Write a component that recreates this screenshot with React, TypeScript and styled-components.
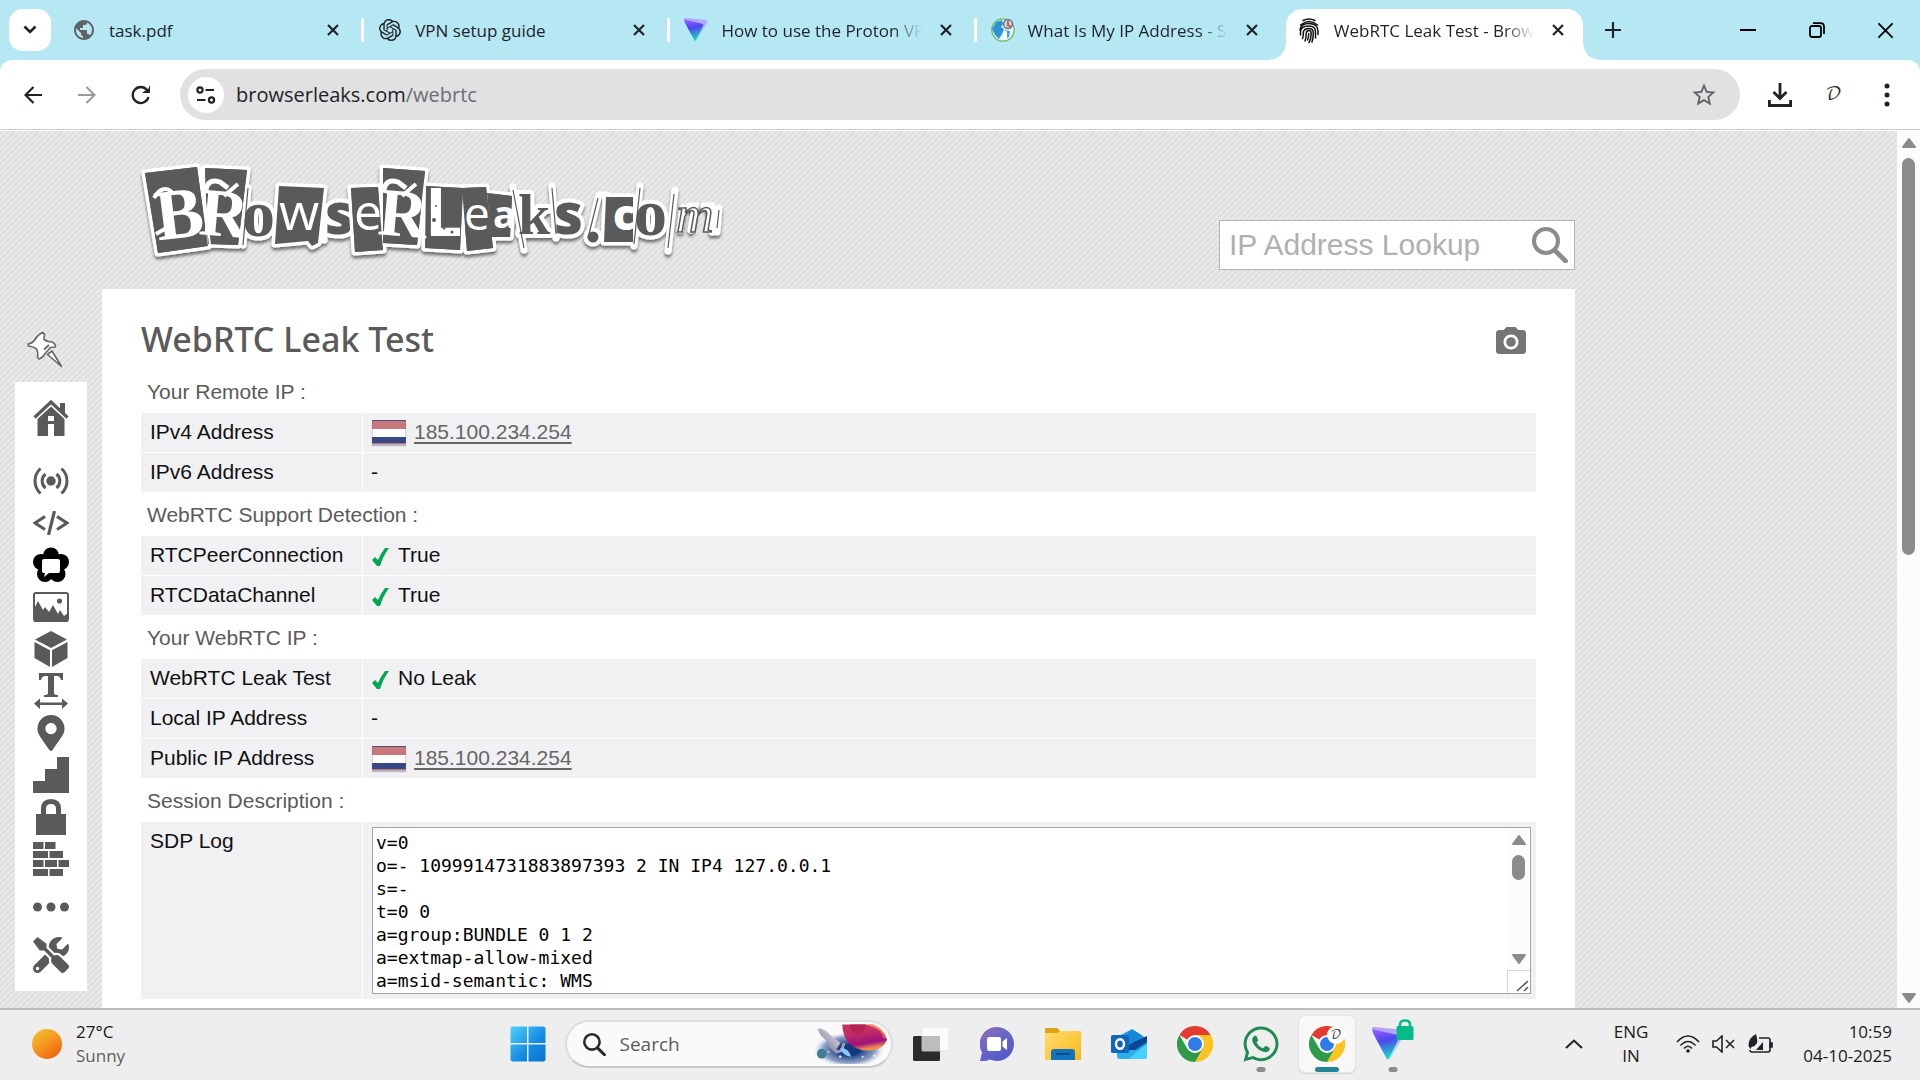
import React from "react";
import styled, { createGlobalStyle, css } from "styled-components";
import { SiOpenai } from "react-icons/si";
import { FaMapMarkerAlt, FaTools, FaWhatsapp } from "react-icons/fa";
import { MdPhotoCamera, MdPublic, MdStarBorder } from "react-icons/md";

const ui = `"Open Sans", "Noto Sans", sans-serif`;
const arial = `"Liberation Sans", Arial, sans-serif`;
const ink = "#5a5a5a";

const GlobalStyle = createGlobalStyle`
  *, *::before, *::after { box-sizing: border-box; }
  body { margin: 0; background: #eeeeee; font-family: ${ui}; }
  button { border: 0; padding: 0; background: none; color: inherit; font: inherit; }
  svg { display: block; flex: none; }
`;

const Screen = styled.div`
  height: 100vh;
  display: flex;
  flex-direction: column;
  overflow: hidden;
`;

/* ---------- tab strip ---------- */

const TabStrip = styled.header`
  height: 60px;
  flex: none;
  display: flex;
  background: #b5e8f3;
`;

const TabSearch = styled.button`
  width: 42px;
  height: 42px;
  margin: 9px 7px 9px 9px;
  flex: none;
  display: grid;
  place-items: center;
  border-radius: 14px;
  background: #fff;
`;

const TabList = styled.nav`
  display: flex;
  flex: 0 1 1531px;
  min-width: 0;
`;

const Tab = styled.div<{ $active?: boolean; $divided?: boolean }>`
  position: relative;
  flex: 1 1 0;
  min-width: 0;
  display: flex;
  align-items: center;
  height: 51px;
  margin-top: 9px;
  padding: 0 23px 9px 14px;
  gap: 13px;
  color: #1f2328;
  ${(p) =>
    p.$divided &&
    css`
      &::after {
        content: "";
        position: absolute;
        right: 0;
        top: 9px;
        width: 3px;
        height: 24px;
        background: #fff;
      }
    `}
  ${(p) =>
    p.$active &&
    css`
      background: #fff;
      border-radius: 16px 16px 0 0;
      margin-left: 3px;
      margin-right: 6px;
      padding: 0 17px 9px 11px;
      &::before,
      &::after {
        content: "";
        position: absolute;
        bottom: 0;
        width: 16px;
        height: 16px;
      }
      &::before {
        left: -16px;
        background: radial-gradient(circle at 0 0, transparent 15px, #fff 16px);
      }
      &::after {
        right: -16px;
        background: radial-gradient(circle at 100% 0, transparent 15px, #fff 16px);
      }
    `}
`;

const TabTitle = styled.span<{ $fade?: boolean }>`
  flex: 1;
  min-width: 0;
  padding-top: 2px;
  margin-right: 3px;
  overflow: hidden;
  white-space: nowrap;
  font-size: 17px;
  line-height: 24px;
  ${(p) =>
    p.$fade &&
    css`
      mask-image: linear-gradient(to right, #000 calc(100% - 30px), transparent);
    `}
`;

const GlyphButton = styled.button<{ $w: number; $h?: number; $color?: string }>`
  width: ${(p) => p.$w}px;
  height: ${(p) => p.$h ?? p.$w}px;
  flex: none;
  display: grid;
  place-items: center;
  color: ${(p) => p.$color ?? "#1f2328"};
`;

const WindowControls = styled.div`
  margin-left: auto;
  display: flex;
`;

/* ---------- toolbar ---------- */

const ToolbarBack = styled.div`
  flex: none;
  background: #b5e8f3;
`;

const Toolbar = styled.div`
  height: 70px;
  display: flex;
  align-items: center;
  padding: 0 6px 0 6px;
  background: #fff;
  border-bottom: 1px solid #c8c8c8;
  border-radius: 12px 12px 0 0;
`;

const Omnibox = styled.label`
  flex: 1;
  min-width: 0;
  height: 51px;
  margin: 0 13px 0 12px;
  padding: 0 9px 0 8px;
  display: flex;
  align-items: center;
  border-radius: 26px;
  background: #e1e1e1;
`;

const SiteInfo = styled.span`
  width: 36px;
  height: 36px;
  flex: none;
  display: grid;
  place-items: center;
  border-radius: 50%;
  background: #fff;
`;

const Url = styled.a`
  flex: 1;
  padding-left: 12px;
  color: #1f2328;
  font-size: 20px;
  line-height: 28px;
  text-decoration: none;
  span { color: #6b6f75; }
`;

const ProfileLetter = styled.span`
  font-family: "DejaVu Math TeX Gyre", "Liberation Serif", serif;
  font-size: 18px;
  line-height: 24px;
  color: #333;
`;

/* ---------- page ---------- */

const Viewport = styled.div`
  flex: 1;
  min-height: 0;
  display: flex;
  background: #fff;
  padding-top: 1px;
`;

const Page = styled.div`
  flex: 1;
  min-width: 0;
  overflow: hidden;
  background: #e5e5e5 linear-gradient(135deg, #ececec 0%, #dcdcdc 25%, #ececec 50%, #dcdcdc 75%, #ececec 100%);
  background-size: 6px 6px;
`;

const Scrollbar = styled.div<{ $w: number }>`
  width: ${(p) => p.$w}px;
  flex: none;
  display: flex;
  flex-direction: column;
  align-items: center;
  background: #fcfcfc;
`;

const Thumb = styled.div<{ $w: number; $h: string }>`
  width: ${(p) => p.$w}px;
  height: ${(p) => p.$h};
  margin: 9px 0 auto;
  border-radius: 8px;
  background: #8b8b8b;
`;

const SiteHeader = styled.div`
  height: 158px;
  margin-right: 322px;
  padding-left: 138px;
  display: flex;
  justify-content: space-between;
  align-items: flex-end;
`;

const LogoLink = styled.a`
  display: block;
  margin-bottom: 26px;
`;

const Lookup = styled.form`
  width: 356px;
  height: 50px;
  margin-bottom: 19px;
  padding: 0 6px 0 9px;
  display: flex;
  align-items: center;
  background: #fff;
  border: 1px solid #b4b4b4;
  input {
    flex: 1;
    min-width: 0;
    padding: 0;
    border: 0;
    outline: 0;
    font: 30px/36px ${arial};
    color: ${ink};
  }
  input::placeholder { color: #b0b0b0; opacity: 1; }
`;

const Columns = styled.div`
  display: flex;
  align-items: flex-start;
`;

const Sidebar = styled.aside`
  width: 102px;
  flex: none;
  padding: 42px 15px 0 15px;
`;

const PinButton = styled.button`
  display: block;
  margin: 0 0 13px 12px;
`;

const SideMenu = styled.nav`
  width: 72px;
  padding: 15px 18px;
  background: #fff;
`;

const SideLink = styled.a<{ $before?: number; $after?: number }>`
  height: 42px;
  margin-top: ${(p) => p.$before ?? 0}px;
  margin-bottom: ${(p) => p.$after ?? 0}px;
  display: grid;
  place-items: center;
  color: ${ink};
`;

const Main = styled.main`
  flex: 1;
  min-width: 0;
  height: 1200px;
  margin-right: 322px;
  padding: 25px 39px 0;
  background: #fff;
`;

const TitleRow = styled.div`
  display: flex;
  justify-content: space-between;
  align-items: center;
  height: 56px;
  padding-right: 7px;
`;

const Title = styled.h1`
  margin: 0;
  padding-bottom: 7px;
  font: 500 34px/44px "Noto Sans", "Open Sans", sans-serif;
  color: ${ink};
`;

const DataTable = styled.table`
  width: 100%;
  table-layout: fixed;
  border-collapse: separate;
  border-spacing: 0;
  font: 21px/26px ${arial};
  color: #111;
  caption {
    height: 43px;
    padding: 9px 6px 0;
    text-align: left;
    color: ${ink};
  }
  th {
    width: 222px;
    padding: 6px 9px;
    border-right: 1px solid #fff;
    text-align: left;
    font-weight: 400;
    vertical-align: top;
  }
  td { padding: 0 8px 1px; }
  th, td {
    height: 40px;
    background: #f1f1f4;
    border-bottom: 1px solid #fff;
  }
`;

const Value = styled.div`
  display: flex;
  align-items: center;
  a {
    color: #666;
    text-decoration: underline;
    text-decoration-thickness: 2px;
    text-underline-offset: 3px;
  }
`;

const Tick = styled.svg`
  margin: 3px 9px 0 1px;
`;

const Flag = styled.span`
  width: 34px;
  height: 24px;
  margin: 0 8px 0 1px;
  border: 1px solid rgba(110, 110, 110, 0.25);
  background: linear-gradient(#c8787d 0 8px, #fff 8px 16px, #384785 16px);
  box-shadow: 0 2px 1px #b8b8bc;
`;

const LogBox = styled.div`
  display: flex;
  height: 167px;
  margin: 5px -3px 4px 1px;
  background: #fff;
  border: 1px solid #a3a3a3;
  textarea {
    flex: 1;
    min-width: 0;
    padding: 3px;
    border: 0;
    outline: 0;
    resize: none;
    overflow: hidden;
    background: none;
    color: #000;
    font: 18px/23px "DejaVu Sans Mono", "Liberation Mono", monospace;
  }
`;

const Resizer = styled.div`
  width: 23px;
  height: 23px;
  border: 1px solid #d8d8d8;
  border-width: 1px 0 0 1px;
  background: #fff;
`;

/* ---------- taskbar ---------- */

const Taskbar = styled.footer`
  height: 72px;
  flex: none;
  display: grid;
  grid-template-columns: 1fr auto 1fr;
  align-items: center;
  padding-bottom: 2px;
  background: #eeeeee;
  border-top: 2px solid #bdbdbd;
  font-size: 17px;
  line-height: 24px;
  color: #1b1b1b;
`;

const Weather = styled.button`
  justify-self: start;
  margin-left: 32px;
  display: flex;
  align-items: center;
  gap: 14px;
  text-align: left;
`;

const Sun = styled.span`
  width: 30px;
  height: 30px;
  border-radius: 50%;
  background: linear-gradient(145deg, #f0c22f 5%, #f59a20 45%, #f2660c 85%);
`;

const Lines = styled.span<{ $align?: string; $w?: number }>`
  display: flex;
  flex-direction: column;
  text-align: ${(p) => p.$align ?? "left"};
  width: ${(p) => (p.$w ? `${p.$w}px` : "auto")};
`;

const Muted = styled.span`
  color: #5f5f5f;
`;

const Apps = styled.div`
  display: flex;
  align-items: center;
`;

const AppButton = styled.button<{ $active?: boolean }>`
  position: relative;
  width: 56px;
  height: 56px;
  margin: 0 5px;
  display: grid;
  place-items: center;
  border-radius: 6px;
  ${(p) =>
    p.$active &&
    css`
      background: #f8f8f8;
      box-shadow: 0 0 0 1px #e4e4e4, 0 1px 1px 1px #d5d5d5;
    `}
`;

const Running = styled.span<{ $active?: boolean }>`
  position: absolute;
  bottom: 0;
  left: 50%;
  width: ${(p) => (p.$active ? 24 : 9)}px;
  height: 5px;
  transform: translateX(-50%);
  border-radius: 3px;
  background: ${(p) => (p.$active ? "#25859a" : "#8b8b8b")};
`;

const SearchPill = styled.label`
  width: 328px;
  height: 48px;
  margin: 0 5px 0 4px;
  padding: 0 2px 0 16px;
  display: flex;
  align-items: center;
  gap: 14px;
  border: 2px solid #dedede;
  border-bottom-color: #c9c9c9;
  border-radius: 24px;
  background: #fafafa;
  input {
    flex: 1;
    min-width: 0;
    padding: 0;
    border: 0;
    outline: 0;
    background: none;
    font: 19px/26px ${ui};
  }
  input::placeholder { color: #5c5c5c; opacity: 1; }
`;

const Tray = styled.div`
  justify-self: end;
  display: flex;
  align-items: center;
  padding-right: 28px;
`;

/* ---------- drawings ---------- */

const Cross = ({ s = 12, w = 2.2 }: { s?: number; w?: number }) => (
  <svg width={s} height={s} viewBox="0 0 12 12" stroke="currentColor" strokeWidth={w} fill="none">
    <path d="M1 1l10 10M11 1L1 11" />
  </svg>
);

const Triangle = ({ down }: { down?: boolean }) => (
  <svg width="16" height="12" viewBox="0 0 16 12" fill="#8b8b8b" stroke="#8b8b8b" strokeWidth="2" strokeLinejoin="round">
    <path d={down ? "M2 2h12L8 10z" : "M2 10h12L8 2z"} />
  </svg>
);

const FingerprintMark = () => (
  <svg width="20" height="26" viewBox="0 0 20 26" fill="none" stroke="#111" strokeWidth="1.500" strokeLinecap="round">
    <path d="M4 2.500q6-3 12 0M1.500 7q8.500-7 17 0M1 12q1-6.500 9-6.500t9 7v4M1.500 17v-3q0-6 8.500-6 6.500 0 6.500 6v6" />
    <path d="M3.500 20.500q1-2 .8-5.500 0-4.500 5.700-4.500 4.300 0 4.300 4.500 0 5-1.300 9M6 23q1.500-4 1.200-8 .3-2.500 2.800-2.500 2.200 0 2.200 3 0 5.500-2.200 9M8.500 22q1.300-3 1.300-6.500" />
  </svg>
);

const ProtonMark = ({ s = 24, id }: { s?: number; id: string }) => (
  <svg width={s} height={s} viewBox="0 0 24 24">
    <defs>
      <linearGradient id={id} x1="0" y1="0" x2="0.2" y2="1">
        <stop offset="0.1" stopColor="#8a5cff" />
        <stop offset="0.45" stopColor="#4f46f0" />
        <stop offset="1" stopColor="#19d3c5" />
      </linearGradient>
      <linearGradient id={`${id}b`} x1="0" y1="0" x2="0" y2="1">
        <stop offset="0" stopColor="#b79cff" />
        <stop offset="1" stopColor="#8ff0ea" />
      </linearGradient>
    </defs>
    <path d="M1 0L22 2q2.500 .5 1.200 2.600L13 22q-1.500 2-2.700 0L0 1.600Q0 0 1 0z" fill={`url(#${id}b)`} />
    <path d="M0 1.500L1 5L10.500 22.500q1 .6 1.500-.6L19 8q.8-2-1.500-2.500z" fill={`url(#${id})`} />
  </svg>
);

const IpFavicon = () => (
  <svg width="24" height="24" viewBox="0 0 24 24">
    <circle cx="12" cy="12" r="11.200" fill="#eaf6fb" stroke="#6bbf6b" strokeWidth="1.300" />
    <path d="M5 4l6-2 1 4-2 3 3 2-2 5-3 5-4-4-3-6z" fill="#2a94d6" />
    <path d="M14 12l5 1-1 6-4 2z" fill="#3ba3dd" />
    <circle cx="17" cy="6" r="4.500" fill="#c7d3dc" stroke="#66788a" strokeWidth="1.500" />
    <path d="M17 2.500v5l3 1" stroke="#e0402d" strokeWidth="1.600" fill="none" />
    <path d="M13 13h3v8h-3z" fill="#fff" />
  </svg>
);

const Magnifier = ({ s, w, color }: { s: number; w: number; color: string }) => (
  <svg width={s} height={s} viewBox="0 0 36 36" fill="none" stroke={color} strokeWidth={w} strokeLinecap="round">
    <circle cx="14" cy="14" r="12" />
    <path d="M23.500 24L33.500 34" strokeWidth={w * 1.2} />
  </svg>
);

const tile = { fill: ink, stroke: "#fff", strokeWidth: 7, strokeLinejoin: "round" as const, paintOrder: "stroke" };
const white = { fill: "#fff" };
const dark = { fill: ink, stroke: "#fff", strokeWidth: 8, strokeLinejoin: "round" as const, paintOrder: "stroke" };
const serif = "'Liberation Serif', serif";
const sans = "'Open Sans', sans-serif";

const Logo = () => (
  <svg width="588" height="103" viewBox="16 20 588 103" role="img" aria-label="BrowserLeaks.com">
    <defs>
      <filter id="logoShadow" x="-5%" y="-10%" width="110%" height="130%">
        <feDropShadow dx="0" dy="3" stdDeviation="1.800" floodColor="#000" floodOpacity="0.5" />
      </filter>
    </defs>
    <g filter="url(#logoShadow)">
      <g stroke="#fff" strokeWidth="7" strokeLinecap="round">
        <path d="M126 48l-5 57M199 48l3 52M391 47l11 63M430 46l4 52M466 100l10-42M518 46l-6 60M553 50l-7 61M597 68l-2 24M590 66l1 26M477 55h8" />
        <path d="M561 68l-3 22M567 66h6l-4 24M582 66h6l2 26" />
      </g>
      <text x="120" y="96" fontFamily={serif} fontWeight="700" fontSize="66" {...dark}>o</text>
      <text x="203" y="94" fontFamily={sans} fontWeight="800" fontSize="56" {...dark}>s</text>
      <text x="396" y="94" fontFamily={serif} fontWeight="700" fontSize="58" {...dark}>k</text>
      <text x="432" y="94" fontFamily={sans} fontWeight="800" fontSize="56" {...dark}>s</text>
      <circle cx="471" cy="97" r="5.500" {...dark} />
      <text x="512" y="95" fontFamily={serif} fontWeight="700" fontSize="66" {...dark}>o</text>
      <path {...tile} d="M23 33L75 27L86 106L36 113z" />
      <path {...tile} d="M83 28L125 30L116 105L86 104z" />
      <path {...tile} d="M157 46L202 48L196 103L190 106L186 101L153 104z" />
      <path {...tile} d="M229 48L256 47L261 110L233 112z" />
      <path {...tile} d="M261 28L303 31L295 105L261 103z" />
      <path {...tile} d="M365 53L390 56L388 97L369 97z" />
      <path {...tile} d="M340 48L364 47L371 108L345 111z" />
      <path {...tile} d="M302 46L341 48L338 110L303 108z" />
      <path {...tile} d="M484 57L511 57L511 102L482 102z" />
    </g>
    <g fill={ink}>
      <path d="M23 33L75 27L86 106L36 113z" />
      <path d="M83 28L125 30L116 105L86 104z" />
      <path d="M229 48L256 47L261 110L233 112z" />
      <path d="M261 28L303 31L295 105L261 103z" />
      <path d="M302 46L341 48L338 110L303 108z" />
      <path d="M340 48L364 47L371 108L345 111z" />
      <path d="M365 53L390 56L388 97L369 97z" />
    </g>
    <path d="M79 26L88 105M303 46l-1 62" stroke="#fff" strokeWidth="2" />
    <g fontFamily={serif} {...white}>
      <text x="34" y="98" fontSize="72" fontWeight="700" transform="rotate(-7 56 80)">B</text>
      <text x="78" y="96" fontSize="68" fontWeight="700" transform="rotate(5 100 70)">R</text>
      <text x="257" y="96" fontSize="68" fontWeight="700" transform="rotate(5 280 70)">R</text>
      <text x="303" y="96" fontSize="66" fontWeight="700" fontFamily={sans}>L</text>
    </g>
    <g fontFamily={sans} {...white}>
      <text x="157" y="90" fontSize="52">w</text>
      <text x="232" y="90" fontSize="50">e</text>
      <text x="342" y="90" fontSize="46">e</text>
      <text x="371" y="88" fontSize="38" fontWeight="700">a</text>
      <text x="491" y="90" fontSize="42" fontWeight="800">c</text>
      <text x="554" y="92" fontSize="52" fontFamily={serif} fontStyle="italic" stroke={ink} strokeWidth="1.500">m</text>
    </g>
    <g stroke={ink} strokeWidth="1.200" fill="none">
      <path d="M126 48l-5 57M391 50l11 58M430 48l4 46M466 98l10-40M518 48l-6 56M552 54l-6 54M597 70l-2 18" />
      <path d="M84 50q2-12 14-8l8 6M262 50q2-12 14-8l8 6" stroke="#fff" strokeWidth="5" />
      <path d="M32 58q8-14 18-6M34 94l14-8M116 44l-14 12M294 44l-14 12" stroke="#fff" strokeWidth="4" />
    </g>
    <g fill={ink}>
      <circle cx="327" cy="62" r="2" />
      <circle cx="312" cy="80" r="2" />
      <circle cx="330" cy="92" r="1.500" />
      <circle cx="322" cy="88" r="1.500" />
      <circle cx="314" cy="66" r="1" />
    </g>
  </svg>
);

const Pin = () => (
  <svg width="36" height="38" viewBox="0 0 36 38" fill="#fff" stroke="#666" strokeWidth="1.600" strokeLinejoin="round">
    <path d="M20.500 23.500L34.500 35.500L25 20z" />
    <path d="M15.500 1.500l2 1.500-.5 5.500q4 3 8.500 2.500l3 3-.5 2-4.500.5-5 5.500q-3 5-6.500 6l-1.500-1.500q1-6-1.500-9-3-2-7.500-2.500l-.5-2q5-1 7-4.500 3-5 7.500-7z" />
    <path d="M17 18.500l5-4.500" strokeWidth="1.800" />
  </svg>
);

const HomeIcon = () => (
  <svg width="36" height="36" viewBox="0 0 36 36" fill="currentColor">
    <path d="M27 3h5v12l-5-5z" />
    <path d="M1.500 17.500L18 2l16.500 15.500" fill="none" stroke="currentColor" strokeWidth="3.200" />
    <path fillRule="evenodd" d="M4.500 19L18 6.500L31.500 19v17H21V24h-6v12H4.500zM15 16v5h6v-5z" />
  </svg>
);

const SignalIcon = () => (
  <svg width="36" height="28" viewBox="0 0 36 28" fill="none" stroke="currentColor" strokeWidth="3">
    <circle cx="18" cy="14" r="4.700" fill="currentColor" stroke="none" />
    <path d="M12.500 7a9 9 0 0 0 0 14M7.500 1.500a17 17 0 0 0 0 25M23.500 7a9 9 0 0 1 0 14M28.500 1.500a17 17 0 0 1 0 25" />
  </svg>
);

const CodeIcon = () => (
  <svg width="36" height="24" viewBox="0 0 36 24" fill="none" stroke="currentColor" strokeWidth="3.200">
    <path d="M12 5.500L2 12l10 6.500M24 5.500L34 12l-10 6.500M21.500 0l-6 24" />
  </svg>
);

const FlowerIcon = () => (
  <svg width="36" height="36" viewBox="0 0 36 36">
    <g fill="#000">
      <circle cx="18" cy="8.500" r="8" />
      <circle cx="8" cy="15" r="8" />
      <circle cx="28" cy="15" r="8" />
      <circle cx="12" cy="27" r="8" />
      <circle cx="24.500" cy="27" r="8" />
    </g>
    <path d="M11 12h14q2 0 2 2v10q0 2-2 2H16l-5 4 1-4q-3 0-3-2V14q0-2 2-2z" fill="#fff" />
  </svg>
);

const ImageIcon = () => (
  <svg width="36" height="30" viewBox="0 0 36 30">
    <rect x="1" y="1" width="34" height="28" rx="2" fill="none" stroke="currentColor" strokeWidth="2" />
    <path d="M1 17l4-8 5 9 2-3 4 5 4-7 5 9 2-4 4 6 4-3v9H1z" fill="currentColor" />
    <circle cx="26.500" cy="9" r="2.600" fill="currentColor" />
  </svg>
);

const CubeIcon = () => (
  <svg width="36" height="36" viewBox="0 0 36 36" fill="currentColor">
    <path d="M18 0l16 8.500L18 17 2 8.500zM1.500 11L17 19.200V36L1.500 27zM34.500 11L19 19.200V36l15.500-9z" />
  </svg>
);

const TypeIcon = () => (
  <svg width="36" height="36" viewBox="0 0 36 36" fill="currentColor">
    <path d="M6 0h24v7h-2q-1-4-4-4h-3v17q0 2 4 2v2H11v-2q4 0 4-2V3h-3q-3 0-4 4H6z" />
    <path d="M1 30.500l6-5v4h22v-4l6 5-6 5.500v-4H7v4z" />
  </svg>
);

const StairsIcon = () => (
  <svg width="36" height="36" viewBox="0 0 36 36" fill="currentColor">
    <path d="M24 0h12v36H0V24h12V12h12z" />
  </svg>
);

const LockIcon = () => (
  <svg width="36" height="36" viewBox="0 0 36 36" fill="currentColor">
    <path d="M3 15h30v21H3z" />
    <path d="M10.500 16v-6q0-7.500 7.500-7.500t7.500 7.500v6" fill="none" stroke="currentColor" strokeWidth="5" />
  </svg>
);

const BricksIcon = () => (
  <svg width="36" height="34" viewBox="0 0 36 34" fill="currentColor">
    <path d="M0 0h10.500v7H0zM12 0h10.500v7H12zM0 9h15v7H0zM16.500 9H30v7H16.500zM0 18h10.500v7H0zM12 18h12v7H12zM25.500 18H36v7H25.500zM0 27h15v7H0zM16.500 27H30v7H16.500z" />
  </svg>
);

const DotsIcon = () => (
  <svg width="36" height="10" viewBox="0 0 36 10" fill="currentColor">
    <circle cx="4.500" cy="5" r="4.500" />
    <circle cx="18" cy="5" r="4.500" />
    <circle cx="31.500" cy="5" r="4.500" />
  </svg>
);

const Chrome = ({ badge }: { badge?: boolean }) => (
  <svg width="36" height="36" viewBox="0 0 36 36">
    <path d="M18 18L2.400 9A18 18 0 0 1 33.600 9z" fill="#e33b2e" />
    <path d="M18 9h15.600A18 18 0 0 1 18 36l7.800-13.500z" fill="#fcc31e" />
    <path d="M2.400 9A18 18 0 0 0 18 36l7.800-13.500L18 18l-7.800 4.500z" fill="#2f9a48" />
    <circle cx="18" cy="18" r="9" fill="#fff" />
    <circle cx="18" cy="18" r="7" fill="#2f7bea" />
    {badge && (
      <>
        <circle cx="27" cy="9" r="9" fill="#fff" />
        <text x="27" y="13" textAnchor="middle" fontSize="12" fontFamily="'DejaVu Math TeX Gyre', serif" fill="#333">𝒟</text>
      </>
    )}
  </svg>
);

const WinLogo = () => (
  <svg width="36" height="36" viewBox="0 0 36 36">
    <defs>
      <linearGradient id="win" x1="0" y1="0" x2="1" y2="1" gradientUnits="objectBoundingBox">
        <stop offset="0" stopColor="#4fd0fd" />
        <stop offset="0.6" stopColor="#148ae0" />
        <stop offset="1" stopColor="#0a74d0" />
      </linearGradient>
    </defs>
    <path d="M2 .5h15v16.500H.5V2zM18.500 .5h15.500l1.500 1.500v15h-17zM.5 18.500H17v17H2L.5 34zM18.500 18.500h17V34L34 35.500H18.500z" fill="url(#win)" />
  </svg>
);

const SpaceArt = () => (
  <svg width="76" height="40" viewBox="0 0 78 40">
    <defs>
      <radialGradient id="space">
        <stop offset="0.3" stopColor="#123a7c" />
        <stop offset="0.75" stopColor="#4668a8" stopOpacity="0.6" />
        <stop offset="1" stopColor="#c9c8ea" stopOpacity="0" />
      </radialGradient>
      <linearGradient id="planet" x1="0" y1="0" x2="0.3" y2="1">
        <stop offset="0" stopColor="#c13566" />
        <stop offset="0.4" stopColor="#c42b66" />
        <stop offset="0.8" stopColor="#a0127a" />
        <stop offset="1" stopColor="#f08a50" />
      </linearGradient>
      <linearGradient id="hull" x1="0" y1="1" x2="1" y2="0">
        <stop offset="0" stopColor="#77708c" />
        <stop offset="1" stopColor="#efeaf6" />
      </linearGradient>
    </defs>
    <ellipse cx="37" cy="26" rx="36" ry="18" fill="url(#space)" />
    <path d="M30 0H55q17 3 21 16-5 11-20 11Q31 25 30 0z" fill="url(#planet)" />
    <path d="M38 0h16q-1 10-8 10-8-1-8-10z" fill="#b52352" />
    <path d="M57 0q14 3 17 14" stroke="#ef7a50" strokeWidth="3" fill="none" opacity="0.7" />
    <path d="M5 4q7 0 11 5l12 10-4 7L11 14Q6 10 5 4z" fill="url(#hull)" />
    <path d="M16 20l8 8 5-1 3-8" fill="none" stroke="#a39bb8" strokeWidth="3" />
    <path d="M28 24q9 0 11 9-9-1-11-9z" fill="#8cc7ff" />
    <circle cx="9" cy="30" r="5" fill="#3f7f96" />
    <g fill="#fff3d0">
      <circle cx="28" cy="33" r="1.200" />
      <circle cx="16" cy="28" r=".9" />
      <circle cx="51" cy="33" r="1" />
      <circle cx="63" cy="32" r="1.200" />
    </g>
  </svg>
);

const TaskView = () => (
  <svg width="36" height="34" viewBox="0 0 36 34">
    <rect x="0" y="9" width="27" height="25" rx="1.500" fill="#2b2b2b" />
    <rect x="9" y="0" width="27" height="24" rx="1" fill="#fbfbfb" stroke="#d8d8d8" strokeWidth=".8" />
    <path d="M9 9h18v15H9z" fill="#bdbdbd" />
  </svg>
);

const ChatIcon = () => (
  <svg width="34" height="34" viewBox="0 0 34 34">
    <defs>
      <linearGradient id="chat" x1="0" y1="0" x2="0.7" y2="1">
        <stop offset="0" stopColor="#9a6bb0" />
        <stop offset="0.45" stopColor="#6a68c8" />
        <stop offset="1" stopColor="#5557cc" />
      </linearGradient>
    </defs>
    <path d="M17 0a17 17 0 1 1-7 32.500Q6 34.500 0 34l2-8.500A17 17 0 0 1 17 0z" fill="url(#chat)" />
    <rect x="7" y="10" width="14" height="14" rx="2" fill="#fff" />
    <path d="M22.500 14.500L27 11v12l-4.500-3.500z" fill="#fff" />
  </svg>
);

const Explorer = () => (
  <svg width="36" height="34" viewBox="0 0 36 34">
    <defs>
      <linearGradient id="folder" x1="0" y1="0" x2="1" y2="1">
        <stop offset="0" stopColor="#ffdd70" />
        <stop offset="1" stopColor="#f9b914" />
      </linearGradient>
    </defs>
    <path d="M1 1h11l3 3v5H0V2z" fill="#e0a010" />
    <path d="M0 6h12l3-2h20q1 0 1 1v28H0z" fill="url(#folder)" />
    <path d="M6 33V25q0-3 3-3h18q3 0 3 3v8z" fill="#1272bd" />
    <path d="M11 27h14" stroke="#0a4e8a" strokeWidth="2" />
  </svg>
);

const Outlook = () => (
  <svg width="36" height="32" viewBox="0 0 36 32">
    <path d="M8 8L21 1l15 10v17q0 3-3 3H9z" fill="#1b9de2" />
    <path d="M18 16l18-8v6L18 26z" fill="#0d4595" />
    <path d="M12 9L22 2l10 6-14 9z" fill="#1687d8" />
    <path d="M15 31l21-15v12q0 3-3 3z" fill="#45d3fb" />
    <path d="M6 22v6q0 3 3 3h9L28 22z" fill="#2bb0ee" />
    <rect x="0" y="7" width="18" height="18" rx="1.500" fill="#1066bd" />
    <ellipse cx="9" cy="16" rx="4" ry="4.800" fill="none" stroke="#fff" strokeWidth="2.400" />
  </svg>
);

const ProtonApp = () => (
  <svg width="42" height="50" viewBox="0 0 42 50">
    <g transform="translate(0 8)">
      <ProtonMark s={34} id="protonTask" />
    </g>
    <rect x="24.500" y="7" width="17" height="14" rx="1.500" fill="#06bb88" />
    <path d="M28 7V5.500q0-4 5-4t5 4V7" fill="none" stroke="#06bb88" strokeWidth="2.600" />
  </svg>
);

/* ---------- data ---------- */

const tabs = [
  { title: "task.pdf", icon: <MdPublic size={24} color="#5f6368" />, divided: true },
  { title: "VPN setup guide", icon: <SiOpenai size={22} />, divided: true },
  { title: "How to use the Proton VPN", icon: <ProtonMark id="protonTab" />, divided: true, fade: true },
  { title: "What Is My IP Address - See", icon: <IpFavicon />, fade: true },
  { title: "WebRTC Leak Test - Browse", icon: <FingerprintMark />, active: true, fade: true },
];

const sideItems = [
  { label: "Home", icon: <HomeIcon />, after: 21 },
  { label: "IP Address", icon: <SignalIcon /> },
  { label: "JavaScript", icon: <CodeIcon /> },
  { label: "WebRTC", icon: <FlowerIcon /> },
  { label: "Canvas", icon: <ImageIcon /> },
  { label: "WebGL", icon: <CubeIcon /> },
  { label: "Fonts", icon: <TypeIcon /> },
  { label: "Geolocation", icon: <FaMapMarkerAlt size={36} /> },
  { label: "Features", icon: <StairsIcon /> },
  { label: "TLS", icon: <LockIcon /> },
  { label: "Content Filters", icon: <BricksIcon /> },
  { label: "More Tools", icon: <DotsIcon />, before: 6 },
  { label: "Settings", icon: <FaTools size={36} />, before: 6 },
];

type Row = { name: string; kind: "ip" | "ok" | "none"; value: string };
const sections: { caption: string; rows: Row[] }[] = [
  {
    caption: "Your Remote IP :",
    rows: [
      { name: "IPv4 Address", kind: "ip", value: "185.100.234.254" },
      { name: "IPv6 Address", kind: "none", value: "-" },
    ],
  },
  {
    caption: "WebRTC Support Detection :",
    rows: [
      { name: "RTCPeerConnection", kind: "ok", value: "True" },
      { name: "RTCDataChannel", kind: "ok", value: "True" },
    ],
  },
  {
    caption: "Your WebRTC IP :",
    rows: [
      { name: "WebRTC Leak Test", kind: "ok", value: "No Leak" },
      { name: "Local IP Address", kind: "none", value: "-" },
      { name: "Public IP Address", kind: "ip", value: "185.100.234.254" },
    ],
  },
];

const sdp = `v=0
o=- 1099914731883897393 2 IN IP4 127.0.0.1
s=-
t=0 0
a=group:BUNDLE 0 1 2
a=extmap-allow-mixed
a=msid-semantic: WMS`;

const RowValue = ({ row }: { row: Row }) => (
  <Value>
    {row.kind === "ip" && (
      <>
        <Flag />
        <a href="#ip">{row.value}</a>
      </>
    )}
    {row.kind === "ok" && (
      <>
        <Tick width="17" height="18" viewBox="0 0 17 18" fill="#06a651">
          <path d="M0 12l3-3 3 3Q9 5 13 0h4Q11 8 8 18H5z" />
        </Tick>
        {row.value}
      </>
    )}
    {row.kind === "none" && row.value}
  </Value>
);

export default function App() {
  return (
    <Screen>
      <GlobalStyle />
      <TabStrip>
        <TabSearch aria-label="Search tabs">
          <svg width="14" height="10" viewBox="0 0 14 10" fill="none" stroke="#1f2328" strokeWidth="2.600">
            <path d="M1.500 1.500L7 7l5.500-5.500" />
          </svg>
        </TabSearch>
        <TabList>
          {tabs.map((t) => (
            <Tab key={t.title} $active={t.active} $divided={t.divided}>
              <GlyphButton as="span" $w={24}>{t.icon}</GlyphButton>
              <TabTitle $fade={t.fade}>{t.title}</TabTitle>
              <GlyphButton $w={16} aria-label={`Close ${t.title}`}>
                <Cross />
              </GlyphButton>
            </Tab>
          ))}
        </TabList>
        <GlyphButton $w={48} $h={60} aria-label="New tab">
          <svg width="16" height="16" viewBox="0 0 16 16" stroke="currentColor" strokeWidth="2.200">
            <path d="M8 0v16M0 8h16" />
          </svg>
        </GlyphButton>
        <WindowControls>
          <GlyphButton $w={69} $h={60} aria-label="Minimize">
            <svg width="16" height="2" viewBox="0 0 16 2" fill="#000"><path d="M0 0h16v2H0z" /></svg>
          </GlyphButton>
          <GlyphButton $w={69} $h={60} aria-label="Restore">
            <svg width="16" height="16" viewBox="0 0 16 16" fill="none" stroke="#000" strokeWidth="1.800">
              <rect x="1" y="4" width="11" height="11" rx="2" />
              <path d="M4 1.200h7.500q3.500 0 3.500 3.500V12" />
            </svg>
          </GlyphButton>
          <GlyphButton $w={69} $h={60} $color="#000" aria-label="Close window">
            <Cross s={17} w={1.3} />
          </GlyphButton>
        </WindowControls>
      </TabStrip>

      <ToolbarBack>
        <Toolbar>
          <GlyphButton $w={54} aria-label="Back">
            <svg width="18" height="18" viewBox="0 0 18 18" fill="none" stroke="currentColor" strokeWidth="2.200">
              <path d="M18 9H2M9.500 1L1.500 9l8 8" />
            </svg>
          </GlyphButton>
          <GlyphButton $w={54} $color="#9b9b9b" aria-label="Forward">
            <svg width="18" height="18" viewBox="0 0 18 18" fill="none" stroke="currentColor" strokeWidth="2">
              <path d="M0 9h16M8.500 1l8 8-8 8" />
            </svg>
          </GlyphButton>
          <GlyphButton $w={54} aria-label="Reload">
            <svg width="20" height="20" viewBox="0 0 20 20" fill="none" stroke="currentColor" strokeWidth="2.300">
              <path d="M17.500 12A8 8 0 1 1 16 5l1 1.500" />
              <path d="M19 0v8h-8l3-2.200 3-1.300z" fill="currentColor" stroke="none" />
            </svg>
          </GlyphButton>
          <Omnibox>
            <SiteInfo>
              <svg width="20" height="18" viewBox="0 0 20 18" fill="none" stroke="#1f2328" strokeWidth="2.200">
                <circle cx="4" cy="4" r="2.600" />
                <path d="M9.500 4H18M1 14h8.500" />
                <circle cx="15.500" cy="14" r="2.600" />
              </svg>
            </SiteInfo>
            <Url href="#page">
              browserleaks.com<span>/webrtc</span>
            </Url>
            <GlyphButton $w={54} $color="#5f6368" aria-label="Bookmark this page">
              <MdStarBorder size={28} />
            </GlyphButton>
          </Omnibox>
          <GlyphButton $w={54} aria-label="Downloads">
            <svg width="24" height="24" viewBox="0 0 24 24" fill="none" stroke="currentColor" strokeWidth="2.800">
              <path d="M12 0v15M5.500 9l6.500 6.500L18.500 9M1.400 17v5.500h21.200V17" />
            </svg>
          </GlyphButton>
          <GlyphButton $w={53} aria-label="Profile">
            <ProfileLetter>𝒟</ProfileLetter>
          </GlyphButton>
          <GlyphButton $w={54} aria-label="Menu">
            <svg width="6" height="24" viewBox="0 0 6 24" fill="currentColor">
              <circle cx="3" cy="3" r="2.500" />
              <circle cx="3" cy="12" r="2.500" />
              <circle cx="3" cy="21" r="2.500" />
            </svg>
          </GlyphButton>
        </Toolbar>
      </ToolbarBack>

      <Viewport>
        <Page>
          <SiteHeader>
            <LogoLink href="#home"><Logo /></LogoLink>
            <Lookup>
              <input type="text" aria-label="IP Address Lookup" placeholder="IP Address Lookup" />
              <GlyphButton $w={36} type="button" aria-label="Look up">
                <Magnifier s={36} w={4} color="#8b8b8b" />
              </GlyphButton>
            </Lookup>
          </SiteHeader>
          <Columns>
            <Sidebar>
              <PinButton aria-label="Pin menu"><Pin /></PinButton>
              <SideMenu>
                {sideItems.map((s) => (
                  <SideLink key={s.label} href="#tool" aria-label={s.label} $before={s.before} $after={s.after}>
                    {s.icon}
                  </SideLink>
                ))}
              </SideMenu>
            </Sidebar>
            <Main>
              <TitleRow>
                <Title>WebRTC Leak Test</Title>
                <GlyphButton $w={36} $color="#757575" aria-label="Take screenshot">
                  <MdPhotoCamera size={36} />
                </GlyphButton>
              </TitleRow>
              {sections.map((s) => (
                <DataTable key={s.caption}>
                  <caption>{s.caption}</caption>
                  <tbody>
                    {s.rows.map((r) => (
                      <tr key={r.name}>
                        <th scope="row">{r.name}</th>
                        <td><RowValue row={r} /></td>
                      </tr>
                    ))}
                  </tbody>
                </DataTable>
              ))}
              <DataTable>
                <caption>Session Description :</caption>
                <tbody>
                  <tr>
                    <th scope="row"><label htmlFor="sdp">SDP Log</label></th>
                    <td>
                      <LogBox>
                        <textarea id="sdp" readOnly value={sdp} />
                        <Scrollbar $w={23}>
                          <svg width="1" height="6" />
                          <Triangle />
                          <Thumb $w={13} $h="25px" />
                          <Triangle down />
                          <svg width="1" height="5" />
                          <Resizer>
                            <svg width="22" height="22" viewBox="0 0 22 22" stroke="#555" strokeWidth="1.500">
                              <path d="M9 20L20 10M16 20l4-4" />
                            </svg>
                          </Resizer>
                        </Scrollbar>
                      </LogBox>
                    </td>
                  </tr>
                </tbody>
              </DataTable>
            </Main>
          </Columns>
        </Page>
        <Scrollbar $w={23}>
          <svg width="1" height="6" />
          <Triangle />
          <Thumb $w={13} $h="45.3%" />
          <Triangle down />
          <svg width="1" height="4" />
        </Scrollbar>
      </Viewport>

      <Taskbar>
        <Weather>
          <Sun />
          <Lines>
            <span>27°C</span>
            <Muted>Sunny</Muted>
          </Lines>
        </Weather>
        <Apps>
          <AppButton aria-label="Start"><WinLogo /></AppButton>
          <SearchPill>
            <Magnifier s={23} w={4} color="#2a2a2a" />
            <input type="text" aria-label="Search" placeholder="Search" />
            <SpaceArt />
          </SearchPill>
          <AppButton aria-label="Task view"><TaskView /></AppButton>
          <AppButton aria-label="Chat"><ChatIcon /></AppButton>
          <AppButton aria-label="File Explorer"><Explorer /></AppButton>
          <AppButton aria-label="Outlook"><Outlook /></AppButton>
          <AppButton aria-label="Chrome"><Chrome /></AppButton>
          <AppButton aria-label="WhatsApp">
            <FaWhatsapp size={40} color="#1f8a52" />
            <Running />
          </AppButton>
          <AppButton $active aria-label="Chrome, active window">
            <Chrome badge />
            <Running $active />
          </AppButton>
          <AppButton aria-label="Proton VPN">
            <ProtonApp />
            <Running />
          </AppButton>
        </Apps>
        <Tray>
          <GlyphButton $w={48} aria-label="Show hidden icons">
            <svg width="18" height="10" viewBox="0 0 18 10" fill="none" stroke="currentColor" strokeWidth="2">
              <path d="M1 9l8-7.500L17 9" />
            </svg>
          </GlyphButton>
          <Lines $align="center" $w={66}>
            <span>ENG</span>
            <span>IN</span>
          </Lines>
          <GlyphButton $w={48} aria-label="Wi-Fi">
            <svg width="24" height="18" viewBox="0 0 24 18" fill="none" stroke="currentColor" strokeWidth="1.700">
              <path d="M1 7q11-12 22 0M4.500 10.500q7.500-8 15 0M8 13.500q4-4.500 8 0" />
              <circle cx="12" cy="16" r="1.800" fill="currentColor" stroke="none" />
            </svg>
          </GlyphButton>
          <GlyphButton $w={24} aria-label="Muted">
            <svg width="24" height="18" viewBox="0 0 24 18" fill="none" stroke="currentColor" strokeWidth="1.600">
              <path d="M1 6h3.500L10 1v16l-5.500-5H1zM14 5l8 8M22 5l-8 8" />
            </svg>
          </GlyphButton>
          <GlyphButton $w={48} aria-label="Battery saver">
            <svg width="26" height="20" viewBox="0 0 26 20" fill="none" stroke="currentColor" strokeWidth="1.600">
              <path d="M12 4h9q2 0 2 2v10q0 2-2 2H5q-2 0-2-2" />
              <path d="M23 9h2v4h-2z" fill="currentColor" />
              <path d="M9 16l7-8v8z" fill="currentColor" stroke="none" />
              <path d="M9 0Q1 4 1.500 12l2 3 1-2q7-1 5.500-9z" fill="currentColor" stroke="none" />
            </svg>
          </GlyphButton>
          <Lines $align="right" $w={108}>
            <span>10:59</span>
            <span>04-10-2025</span>
          </Lines>
        </Tray>
      </Taskbar>
    </Screen>
  );
}
